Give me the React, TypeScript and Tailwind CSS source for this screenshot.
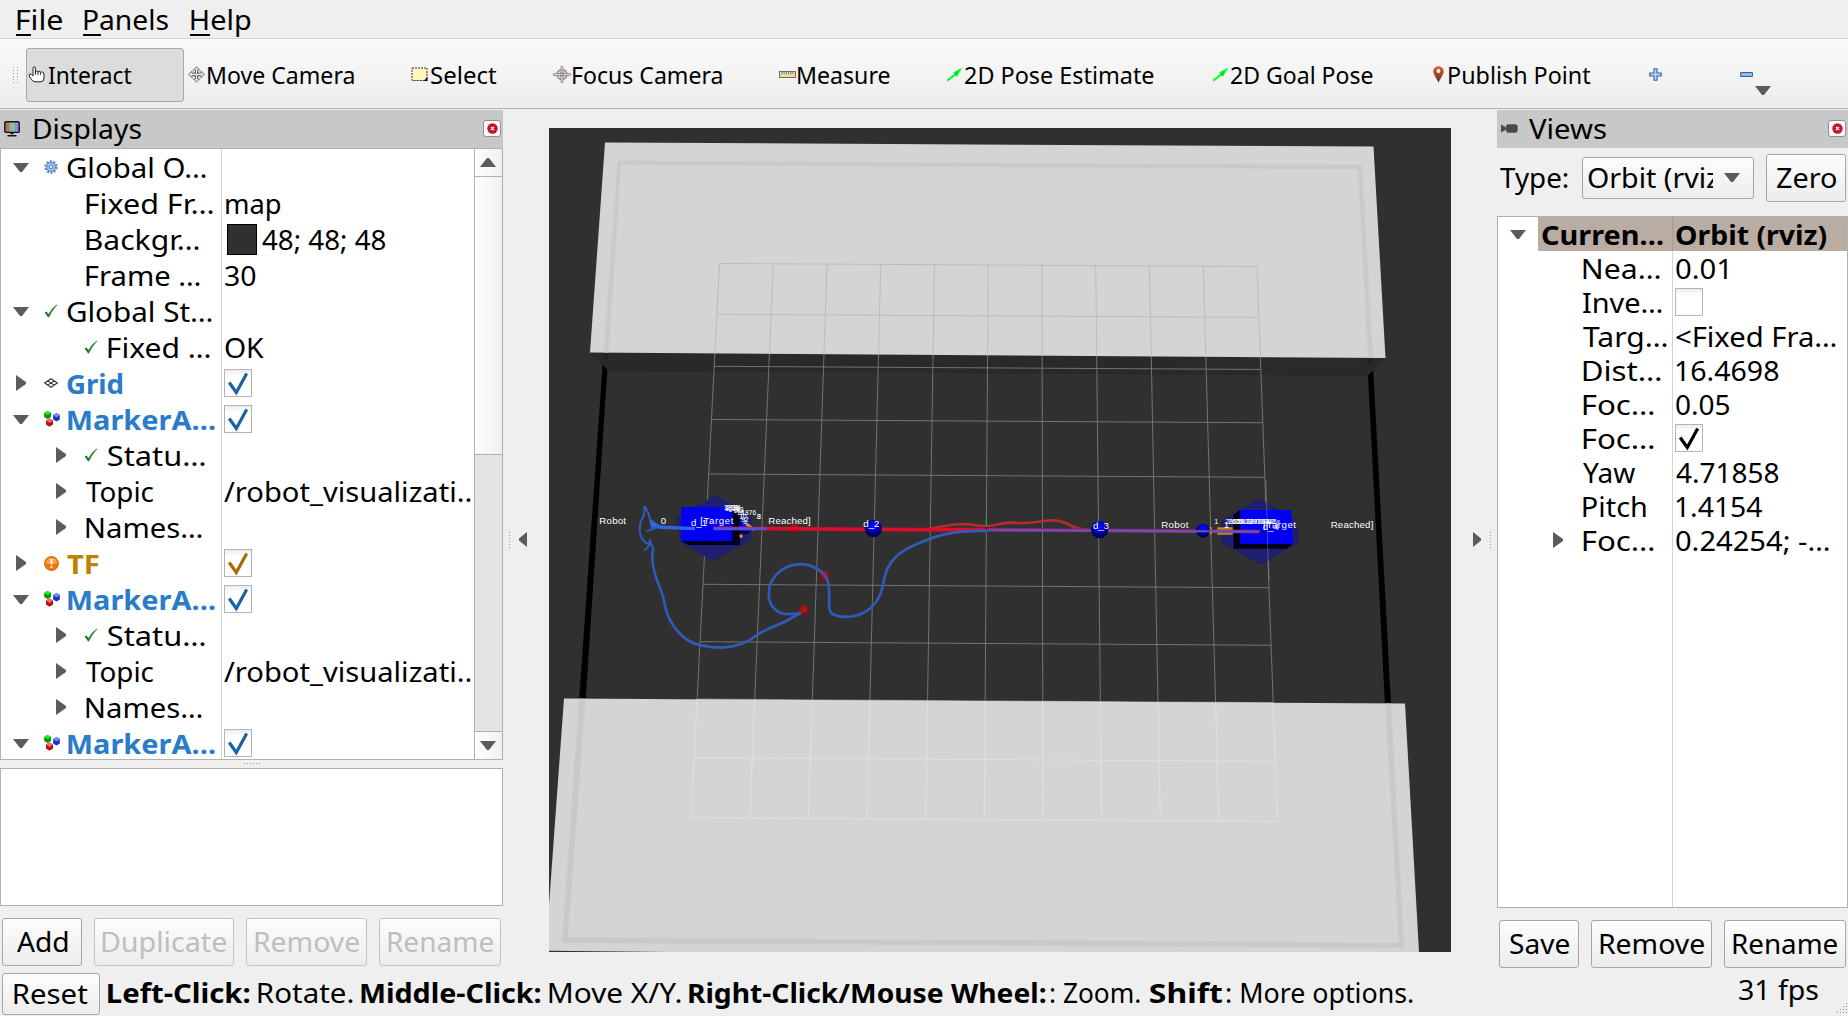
import React from "react";

/* ---------- text ---------- */

const canvas = document.createElement("canvas").getContext("2d")!;

/** A single line of text whose inked area is exactly `w` pixels wide. */
function T({ w, size = 27, bold = false, children, className = "" }: { w: number; size?: number; bold?: boolean; children: string; className?: string }) {
  canvas.font = `${bold ? 700 : 400} ${size}px "Noto Sans", sans-serif`;
  const m = canvas.measureText(children);
  const ink = m.actualBoundingBoxLeft + m.actualBoundingBoxRight;
  return (
    <span className={`block shrink-0 whitespace-pre ${bold ? "font-bold" : ""} ${className}`} style={{ width: w, fontSize: size }}>
      <span className="inline-block origin-left" style={{ transform: `scaleX(${w / ink}) translateX(${m.actualBoundingBoxLeft}px)` }}>
        {children}
      </span>
    </span>
  );
}

/* ---------- small drawings ---------- */

const Down = ({ className = "" }) => (
  <svg width="16" height="9" className={className}><path d="M0 0H16L9 9H7Z" fill="#5b5b5b" /></svg>
);
const Up = () => (
  <svg width="16" height="9"><path d="M0 9H16L9 0H7Z" fill="#5b5b5b" /></svg>
);
const Right = () => (
  <svg width="10" height="16"><path d="M0 0L10 7V9L0 16Z" fill="#5b5b5b" /></svg>
);
const Hand = () => (
  <svg width="17" height="17" viewBox="0 0 17 17">
    <path d="M5 10V2.2Q5 .8 6.2 .8T7.4 2.2V6.5Q7.4 5 8.7 5T10 6.5Q10 5.3 11.2 5.3T12.4 6.8Q12.6 5.8 13.7 5.8Q16 6 16 8V12Q16 15.8 13 15.8H7Q5 15.8 3.6 13.6L1.2 10Q.6 8 2 8Q3.4 8 5 10Z" fill="#fff" stroke="#222" strokeWidth="1" />
    <path d="M7.4 6V9M10 6.5V9M12.4 7V9" stroke="#222" strokeWidth=".9" />
  </svg>
);
const Move = () => (
  <svg width="17" height="17" viewBox="0 0 17 17" fill="#f4f4f4" stroke="#666" strokeWidth="1">
    <path d="M8.5 .8L11.5 4H9.5V7.3H13V5.3L16.3 8.4L13 11.6V9.6H9.5V13H11.5L8.5 16.2L5.5 13H7.5V9.6H4V11.6L.7 8.4L4 5.3V7.3H7.5V4H5.5Z" />
    <path d="M4.6 4.6L12.4 12.2M12.4 4.6L4.6 12.2" strokeDasharray="1 1" />
  </svg>
);
const SelectIcon = () => (
  <svg width="17" height="15" viewBox="0 0 17 15">
    <rect x="1" y="1" width="15" height="12.5" fill="#fdf7bb" stroke="#333" strokeDasharray="2 1" />
    <path d="M16.5 10V14H12.5Z" fill="#111" />
  </svg>
);
const Focus = () => (
  <svg width="18" height="17" viewBox="0 0 18 17" fill="none" stroke="#858585" strokeWidth="1">
    <circle cx="9" cy="8.5" r="5" fill="#e6e6e6" strokeWidth="1.3" />
    <circle cx="9" cy="8.5" r="2.4" />
    <path d="M8 .5H10V16.5H8ZM.5 7.5H17.5V9.5H.5Z" strokeWidth=".8" fill="#ddd" />
  </svg>
);
const Ruler = () => (
  <svg width="17" height="7" viewBox="0 0 17 7">
    <rect x=".5" y=".5" width="16" height="6" fill="#e9dfa6" stroke="#6f6f68" />
    <path d="M3 1V3.5M5.2 1V3M7.4 1V3.5M9.6 1V3M11.8 1V3.5M14 1V3" stroke="#66624c" strokeWidth=".8" />
  </svg>
);
const GreenArrow = () => (
  <svg width="17" height="15" viewBox="0 0 17 15">
    <path d="M16.5 .5L7 5.4L8.3 6.8L.6 12.8L2 14.4L9.6 8.6L10.9 9.8Z" fill="#0aff2c" />
    <path d="M12 3.5L8.8 6.7L10.6 9.4Z" fill="#08c422" />
  </svg>
);
const Pin = () => (
  <svg width="11" height="17" viewBox="0 0 11 17">
    <defs><linearGradient id="pin" x2="0" y2="1"><stop stopColor="#ef5a3a" /><stop offset="1" stopColor="#5b2f14" /></linearGradient></defs>
    <path d="M5.5 .3C8.6 .3 10.7 2.6 10.7 5.4C10.7 8.3 7.4 12 5.5 16.7C3.6 12 .3 8.3 .3 5.4C.3 2.6 2.4 .3 5.5 .3Z" fill="url(#pin)" />
    <circle cx="5.5" cy="5" r="1.9" fill="#fff" />
  </svg>
);
const Plus = () => (
  <svg width="13" height="13" viewBox="0 0 13 13"><path d="M5 .8H8V5H12.2V8H8V12.2H5V8H.8V5H5Z" fill="#b9d3f2" stroke="#3465a4" strokeWidth="1.1" /></svg>
);
const Minus = () => (
  <svg width="13" height="5" viewBox="0 0 13 5"><rect x=".6" y=".6" width="11.8" height="3.8" rx=".5" fill="#a9c6ec" stroke="#3465a4" strokeWidth="1.1" /></svg>
);
const Monitor = () => (
  <svg width="16" height="16" viewBox="0 0 16 16">
    <path d="M1 1H6V11H1Z" fill="#c46a6a" /><path d="M5.5 1H10.5V11H5.5Z" fill="#7fc98a" /><path d="M10.5 1H15V11H10.5Z" fill="#8c8ce8" />
    <rect x=".8" y=".8" width="14.4" height="10.6" rx="1" fill="none" stroke="#111" strokeWidth="1.4" />
    <path d="M6.5 11.5H9.5V13.3H6.5ZM3.5 14H12.5V15.5H3.5Z" fill="#111" />
  </svg>
);
const Camera = () => (
  <svg width="17" height="9" viewBox="0 0 17 9"><path d="M0 .6L4.5 3V6L0 8.4Z" fill="#4a4a4a" /><rect x="5" y=".3" width="11.7" height="8.4" rx="2.6" fill="#4a4a4a" /><path d="M4 4H6V5H4Z" fill="#4a4a4a" /></svg>
);
const Close = () => (
  <span className="flex h-[17px] w-[18px] items-center justify-center rounded-[3px] border border-[#8f8f8f] bg-[#fbfbfb]">
    <svg width="11" height="11" viewBox="0 0 11 11"><circle cx="5.5" cy="5.5" r="5.2" fill="#c8102e" /><path d="M3.9 3.9L7.1 7.1M7.1 3.9L3.9 7.1" stroke="#fff" strokeWidth="1.3" /></svg>
  </span>
);
const Gear = () => (
  <svg width="14" height="14" viewBox="0 0 14 14">
    <circle cx="7" cy="7" r="5.6" fill="none" stroke="#5b8ccb" strokeWidth="2.2" strokeDasharray="2.2 1.3" />
    <circle cx="7" cy="7" r="4.4" fill="#a9c7ec" stroke="#4f82c4" strokeWidth="1" />
    <circle cx="7" cy="7" r="1.9" fill="#dbe8f8" stroke="#4f82c4" strokeWidth="1" />
  </svg>
);
const Ok = () => (
  <svg width="14" height="14" viewBox="0 0 14 14"><path d="M.6 8.6L2.6 7.4L4.4 10.2Q7.5 4.5 12.8 .6L13.2 1Q8 6.5 5 13.2H4Z" fill="#1f7a1f" /></svg>
);
const GridIcon = () => (
  <svg width="14" height="10" viewBox="0 0 14 10" fill="none" stroke="#333" strokeWidth="1.1"><path d="M7 .7L13.3 5L7 9.3L.7 5ZM3.8 2.9L10.1 7.1M10.1 2.9L3.8 7.1" /></svg>
);
const Cubes = () => (
  <svg width="16" height="16" viewBox="0 0 16 16">
    <path d="M3.6 0L7 2V6L3.6 8L.2 6V2Z" fill="#0a8f0a" /><path d="M3.6 0L7 2L3.6 4.2L.2 2Z" fill="#18f018" />
    <path d="M12.5 2L15.8 4V8.5L12.5 10.5L9.2 8.5V4Z" fill="#1733b8" /><path d="M12.5 2L15.8 4L12.5 6.5L9.2 4Z" fill="#6d8dff" />
    <path d="M5.5 7.5L9 9.5V13.5L5.5 15.8L2 13.5V9.5Z" fill="#b31212" /><path d="M5.5 7.5L9 9.5L5.5 12L2 9.5Z" fill="#f26a6a" />
  </svg>
);
const Warn = () => (
  <svg width="15" height="15" viewBox="0 0 15 15"><circle cx="7.5" cy="7.5" r="6.9" fill="#f57900" stroke="#ce5c00" /><path d="M1.8 7Q2.5 2 7.5 1.7Q12.5 2 13.2 7Q7.5 9 1.8 7Z" fill="#fba34c" /><path d="M7.5 3V8.5M7.5 10V12" stroke="#fff" strokeWidth="1.9" /></svg>
);

function Check({ color }: { color?: string }) {
  return (
    <span className="block size-7 shrink-0 border border-[#b4b4b4] bg-gradient-to-b from-[#ececec] via-white via-25% to-white">
      {color && <svg width="26" height="26" viewBox="0 0 26 26"><path d="M4.2 12.5L11.3 22.5L21.7 3.5" fill="none" stroke={color} strokeWidth="3.2" /></svg>}
    </span>
  );
}

const DotsV = () => (
  <div className="flex w-px flex-col gap-0.5">{[0, 1, 2, 3, 4, 5].map((i) => <i key={i} className="block h-px w-px bg-[#999]" />)}</div>
);

function Button({ label, w, tw, h = "h-12", disabled = false }: { label: string; w: string; tw: number; h?: string; disabled?: boolean }) {
  return (
    <div className={`flex ${h} ${w} shrink-0 items-center justify-center rounded-[3px] border bg-gradient-to-b from-[#fdfdfd] to-[#ececec] pb-[2px] ${disabled ? "border-[#c3c3c3] text-[#bebebe]" : "border-[#a6a6a6]"}`}>
      <T w={tw}>{label}</T>
    </div>
  );
}

/* ---------- toolbar ---------- */

const tools: [string, string, React.ReactNode, number][] = [
  ["ml-1", "w-[20px]", <Move />, 146],
  ["ml-[57px]", "w-[20px]", <SelectIcon />, 66],
  ["ml-[56px]", "w-[20px]", <Focus />, 149],
  ["ml-[57px]", "w-[19px]", <Ruler />, 92],
  ["ml-[56px]", "w-[19px]", <GreenArrow />, 189],
  ["ml-[58px]", "w-[19px]", <GreenArrow />, 142],
  ["ml-[60px]", "w-[16px]", <Pin />, 142],
];
const toolNames = ["Move Camera", "Select", "Focus Camera", "Measure", "2D Pose Estimate", "2D Goal Pose", "Publish Point"];

function Toolbar() {
  return (
    <div className="flex h-[70px] items-center border-b border-[#b1b1b1] bg-gradient-to-b from-[#fafafa] to-[#ededed] pt-[2px]">
      <div className="ml-[13px] flex w-[13px] shrink-0 gap-[3px]"><DotsV /><DotsV /></div>
      <div className="flex h-[54px] w-[158px] shrink-0 items-center rounded-[3px] border border-[#a8a8a8] bg-[#dcdcdc] pl-px">
        <span className="w-5"><Hand /></span>
        <T w={84} size={24} className="mt-px">Interact</T>
      </div>
      {tools.map(([ml, iw, icon, w], i) => (
        <div key={i} className={`flex shrink-0 items-center ${ml}`}>
          <span className={`${iw} shrink-0`}>{icon}</span>
          <T w={w} size={24} className="mt-px">{toolNames[i]}</T>
        </div>
      ))}
      <span className="ml-[58px]"><Plus /></span>
      <span className="ml-[78px]"><Minus /></span>
      <Down className="mt-[31px] ml-0.5" />
    </div>
  );
}

/* ---------- property trees ---------- */

type Row = { lvl: number; arrow?: "d" | "r"; icon?: React.ReactNode; name: string; nw: number; color?: string; val?: string; vw?: number; check?: string; swatch?: boolean };
const BLUE = "text-[#2a7ccb]";
const marker = (): Row => ({ lvl: 0, arrow: "d", icon: <Cubes />, name: "MarkerA…", nw: 147, color: BLUE, check: "#1b62a5" });
const markerKids = (): Row[] => [
  { lvl: 1, arrow: "r", icon: <Ok />, name: "Statu…", nw: 97 },
  { lvl: 1, arrow: "r", name: "Topic", nw: 68, val: "/robot_visualizati..", vw: 247 },
  { lvl: 1, arrow: "r", name: "Names…", nw: 116 },
];
const displays: Row[] = [
  { lvl: 0, arrow: "d", icon: <Gear />, name: "Global O…", nw: 139 },
  { lvl: 1, name: "Fixed Fr…", nw: 127, val: "map", vw: 55 },
  { lvl: 1, name: "Backgr…", nw: 113, val: "48; 48; 48", vw: 124, swatch: true },
  { lvl: 1, name: "Frame …", nw: 114, val: "30", vw: 31 },
  { lvl: 0, arrow: "d", icon: <Ok />, name: "Global St…", nw: 145 },
  { lvl: 1, icon: <Ok />, name: "Fixed …", nw: 102, val: "OK", vw: 39 },
  { lvl: 0, arrow: "r", icon: <GridIcon />, name: "Grid", nw: 56, color: BLUE, check: "#1b62a5" },
  marker(),
  ...markerKids(),
  { lvl: 0, arrow: "r", icon: <Warn />, name: "TF", nw: 32, color: "text-[#c08000]", check: "#a66c00" },
  marker(),
  ...markerKids(),
  marker(),
];

function DisplayRow({ r }: { r: Row }) {
  return (
    <div className="flex h-9 shrink-0">
      <div className="flex w-[221px] shrink-0 items-center border-r border-[#d4d4d4]">
        {r.lvl === 1 && <span className="w-10 shrink-0" />}
        <span className={`${r.lvl && !r.icon ? "w-[45px]" : "w-[43px]"} shrink-0 ${r.arrow === "r" ? "pl-[15px]" : "pl-3"}`}>
          {r.arrow === "d" && <Down />}
          {r.arrow === "r" && <Right />}
        </span>
        {r.icon && <span className={`${r.lvl || r.name === "MarkerA…" ? "w-6" : "w-[23px]"} shrink-0`}>{r.icon}</span>}
        <T w={r.nw} bold={!!r.color} className={r.color}>{r.name}</T>
      </div>
      <div className="flex items-center pl-[2px]">
        {r.check && <Check color={r.check} />}
        {r.swatch && <span className="mr-[5px] ml-[3px] block h-[31px] w-[30px] border border-black bg-[#303030]" />}
        {r.val && <T w={r.vw!} className={r.val === "map" ? "ml-[2px]" : r.swatch || r.val[0] === "/" ? "" : "ml-px"}>{r.val}</T>}
      </div>
    </div>
  );
}

function DisplaysPanel() {
  return (
    <section className="flex w-[503px] shrink-0 flex-col">
      <header className="flex h-[38px] shrink-0 items-center bg-[#c8c8c8] pr-[2px] pb-px pl-1">
        <Monitor />
        <T w={107} className="ml-[14px]">Displays</T>
        <span className="ml-auto"><Close /></span>
      </header>
      <div className="flex h-[612px] shrink-0 overflow-hidden border border-[#b1b1b1] bg-white">
        <div className="h-[610px] w-[473px] overflow-hidden">{displays.map((r, i) => <DisplayRow key={i} r={r} />)}</div>
        <div className="flex w-7 shrink-0 flex-col border-l border-[#b1b1b1]">
          <div className="flex h-7 items-center justify-center border-b border-[#b1b1b1] bg-gradient-to-r from-white to-[#f0f0f0] pr-px"><Up /></div>
          <div className="h-[278px] border-b border-[#b1b1b1] bg-gradient-to-r from-white to-[#f0f0f0]" />
          <div className="flex-1 bg-[#e4e4e4]" />
          <div className="flex h-7 items-center justify-center border-t border-[#b1b1b1] bg-gradient-to-r from-white to-[#f0f0f0] pr-px pb-px"><Down /></div>
        </div>
      </div>
      <div className="flex h-2 shrink-0 items-center justify-center gap-0.5 pb-px">{[0, 1, 2, 3, 4, 5].map((i) => <i key={i} className="block size-px bg-[#999]" />)}</div>
      <div className="h-[138px] shrink-0 border border-[#b1b1b1] bg-white" />
      <div className="mt-3 flex gap-3 pl-[2px]">
        <Button label="Add" w="w-20" tw={51} />
        <Button label="Duplicate" w="w-[140px]" tw={124} disabled />
        <Button label="Remove" w="w-[121px]" tw={104} disabled />
        <Button label="Rename" w="w-[122px]" tw={105} disabled />
      </div>
    </section>
  );
}

const views: Row[] = [
  { lvl: 0, arrow: "d", name: "Curren…", nw: 121, val: "Orbit (rviz)", vw: 151 },
  { lvl: 1, name: "Nea…", nw: 77, val: "0.01", vw: 51 },
  { lvl: 1, name: "Inve…", nw: 79, check: "none" },
  { lvl: 1, name: "Targ…", nw: 84, val: "<Fixed Fra…", vw: 160 },
  { lvl: 1, name: "Dist…", nw: 78, val: "16.4698", vw: 103 },
  { lvl: 1, name: "Foc…", nw: 71, val: "0.05", vw: 53 },
  { lvl: 1, name: "Foc…", nw: 71, check: "#000" },
  { lvl: 1, name: "Yaw", nw: 52, val: "4.71858", vw: 103 },
  { lvl: 1, name: "Pitch", nw: 63, val: "1.4154", vw: 86 },
  { lvl: 1, arrow: "r", name: "Foc…", nw: 71, val: "0.24254; -…", vw: 153 },
];

function ViewsPanel() {
  return (
    <section className="flex w-[351px] shrink-0 flex-col">
      <header className="flex h-[38px] shrink-0 items-center bg-[#c8c8c8] pr-[2px] pb-px pl-1">
        <Camera />
        <T w={77} className="ml-[11px]">Views</T>
        <span className="ml-auto"><Close /></span>
      </header>
      <div className="flex h-[68px] shrink-0 items-center pb-[8px] pl-[3px]">
        <T w={68} className="-mt-px">Type:</T>
        <div className="ml-[14px] flex h-[42px] w-[172px] items-center rounded-[3px] border border-[#a6a6a6] bg-gradient-to-b from-[#fdfdfd] to-[#ececec] pb-[2px] pl-[5px]">
          <span className="w-[125px] overflow-x-clip"><T w={140}>Orbit (rviz)</T></span>
          <Down className="mt-px ml-[11px]" />
        </div>
        <div className="ml-3"><Button label="Zero" w="w-20" tw={59} /></div>
      </div>
      <div className="flex h-[692px] shrink-0 flex-col border border-[#b1b1b1] bg-white">
        {views.map((r, i) => (
          <div key={i} className="flex h-[34px] shrink-0">
            <div className="flex w-10 shrink-0 items-center pl-3">{i === 0 && <Down />}</div>
            <div className={`flex w-[135px] shrink-0 items-center border-r ${i === 0 ? "border-[#a99c93] bg-[#b9aca2] pl-1" : "border-[#d4d4d4]"}`}>
              {i > 0 && <span className="w-[45px] shrink-0 pl-[15px]">{r.arrow && <Right />}</span>}
              <T w={r.nw} bold={i === 0}>{r.name}</T>
            </div>
            <div className={`flex flex-1 items-center ${i === 0 ? "bg-[#b9aca2]" : ""} ${r.check ? "pl-[2px]" : "pl-[3px]"}`}>
              {r.check && <Check color={r.check === "none" ? undefined : r.check} />}
              {r.val && <T w={r.vw!} bold={i === 0}>{r.val}</T>}
            </div>
          </div>
        ))}
        <div className="w-[175px] flex-1 border-r border-[#d4d4d4]" />
      </div>
      <div className="mt-3 flex gap-3 pl-[2px]">
        <Button label="Save" w="w-20" tw={59} />
        <Button label="Remove" w="w-[121px]" tw={104} />
        <Button label="Rename" w="w-[122px]" tw={104} />
      </div>
    </section>
  );
}

/* ---------- 3D scene ---------- */

const rowY = [263.5, 314.3, 366.3, 419.5, 474, 529, 584.3, 641.7, 699, 757.7, 817.7];
function gridPath() {
  let d = "";
  for (let i = 0; i <= 10; i++) {
    d += `M${719.5 + i * 53.75} ${263.5 + i * 0.3}L${691 + i * 58.66} ${817.7 + i * 0.38}`;
    const t = (rowY[i] - 263.5) / 554.2;
    d += `M${719.5 - 28.5 * t} ${rowY[i]}L${1257 + 20.6 * t} ${rowY[i] + 3 + 0.8 * t}`;
  }
  return d;
}
const upper = "M605 142.5L1373.5 146.5L1385.5 358L590 352.5Z";
const lower = "M564 698.5L1405 703.5L1419 952H670L549 950.8V905Z";

function Scene() {
  const g = gridPath();
  return (
    <svg width="902" height="824" viewBox="549 128 902 824" className="block" fontFamily="Liberation Sans, Arial, sans-serif">
      <defs>
        <radialGradient id="sb" cx=".5" cy=".35"><stop stopColor="#1010ff" /><stop offset=".65" stopColor="#0000c8" /><stop offset="1" stopColor="#00005a" /></radialGradient>
        <radialGradient id="sr" cx=".5" cy=".4"><stop stopColor="#c01c1c" /><stop offset="1" stopColor="#7c1010" /></radialGradient>
        <clipPath id="up"><path d={upper} /></clipPath>
        <clipPath id="lo"><path d={lower} /></clipPath>
      </defs>
      <rect x="549" y="128" width="902" height="824" fill="#303030" />
      <path d="M603.5 352L608.5 352L585.5 702H579Z" fill="#000" />
      <path d="M1367 356H1372.5L1391 705H1385Z" fill="#000" />
      <path d="M590 352.5L609 361L1368 366L1385.5 358L1368 375.5L609 371Z" fill="#292929" />
      <path d="M590 352.5L609 371L1368 375.5L1385.5 358Z" fill="#292929" fillOpacity=".85" />
      <path d={g} fill="none" stroke="#737373" strokeWidth="1" />

      <path d={upper} fill="#d4d4d4" />
      <g clipPath="url(#up)">
        <path d="M617.5 160.5L1362 165L1373 358H1368L1358 169.3L621 165L608.5 354H603.5Z" fill="#cacaca" />
        <path d={g} fill="none" stroke="#bcbcbc" strokeWidth="1" />
      </g>
      <path d={lower} fill="#d4d4d4" />
      <g clipPath="url(#lo)">
        <path d="M579 698L585.5 698L568 937L1399 943L1385 702H1391L1404 947.7L562 943Z" fill="#c9c9c9" />
        <path d={g} fill="none" stroke="#dfdfdf" strokeWidth="1.2" />
      </g>

      <g transform="translate(580 480) scale(.333333)">
        {/* left robot */}
        <path d="M406 45L516 108L514 180L398 244L300 186L288 112Z" fill="#1f1f70" />
        <path d="M456 80L480 100V195H326L304 183Z" fill="#00001c" />
        <path d="M304 81H457V183H304Z" fill="#0000f4" />
        <path d="M480 165L486 172" stroke="#d89a10" strokeWidth="9" />
        <circle cx="494" cy="144" r="19" fill="url(#sb)" />
        <path d="M500 132L522 150" stroke="#d89a10" strokeWidth="9" />
        {/* right robot */}
        <path d="M2036 55L2146 118L2156 150L2153 190L2042 254L1926 190L1924 122Z" fill="#1f1f70" />
        <path d="M1960 104L1980 90V192H2138L2120 206H1961Z" fill="#000018" />
        <path d="M1980 90H2133L2139 192H1980Z" fill="#0000f4" />
        <circle cx="2068" cy="152" r="24" fill="#0000e8" />
        <path d="M2058 0L2063 200L2068 300" stroke="#8888b8" strokeWidth="2.5" fill="none" opacity=".6" />

        {/* planned routes */}
        <path d="M1046 145C1090 142 1110 132 1150 132C1180 133 1200 140 1225 138C1250 136 1265 127 1300 128C1335 132 1360 128 1390 123C1430 118 1450 124 1475 138Q1490 147 1520 149" fill="none" stroke="#b32c30" strokeWidth="8" />
        <path d="M400 145L1000 149L1226 149" stroke="#dc0c2c" strokeWidth="11" fill="none" />
        <path d="M1226 149L2040 155" stroke="#a01838" strokeWidth="11" fill="none" />
        <path d="M1226 150L2036 155" stroke="#6d4cb4" strokeWidth="8" fill="none" />
        <path d="M1219 115V139" stroke="#00c800" strokeWidth="3.5" />
        <path d="M1219 141V153" stroke="#0a0a80" strokeWidth="4" />
        <path d="M1912 142H1958V149H1912ZM1912 158H1958V164H1912ZM1888 141H1895V163H1888Z" fill="#c58a10" />
        <circle cx="644" cy="146" r="15" fill="url(#sr)" />
        <path d="M620 146H680" stroke="#dc0c2c" strokeWidth="10" />
        <circle cx="734" cy="287" r="16" fill="url(#sr)" />
        <circle cx="671" cy="391" r="16" fill="url(#sr)" />

        {/* driven route */}
        <g fill="none" stroke="#2f5cb8" strokeWidth="8" strokeLinejoin="round">
          <path d="M218 210C214 240 222 280 234 308C246 335 250 350 256 380C264 420 290 458 322 480C355 500 390 503 425 503C470 502 505 486 535 462C575 438 600 436 635 414L661 399C640 403 620 403 604 400C575 388 564 365 567 335C568 295 605 258 650 253C690 249 728 270 741 297C752 322 746 350 748 385Q749 395 757 402C790 418 840 412 872 384C895 362 902 345 909 315C916 275 925 252 948 230C970 208 995 198 1020 188C1060 170 1110 156 1160 154L1226 152" />
          <path d="M193 78Q205 92 210 118L236 139L200 154M193 78Q196 105 184 120Q174 150 184 172Q194 190 206 192M193 212L208 196L209 180L222 212" strokeWidth="6" />
          <path d="M208 118L240 138L214 143Z" fill="#2f6be0" strokeWidth="3" />
        </g>
        <path d="M232 141L345 146" stroke="#2c68e0" strokeWidth="10" />
        <path d="M400 146H560" stroke="#4a56e0" strokeWidth="8" />
        <circle cx="376" cy="150" r="24" fill="#0000ee" />

        <circle cx="880" cy="146" r="26" fill="url(#sb)" />
        <circle cx="1559" cy="149" r="26" fill="url(#sb)" />
        <circle cx="1869" cy="152" r="21" fill="url(#sb)" />
        <path d="M1585 152L2034 155" stroke="#6d4cb8" strokeWidth="7" />

        {/* labels */}
        <g fill="#fff" fontSize="29">
          <text x="58" y="133" textLength="80">Robot</text>
          <text x="242" y="133">0</text>
          <text x="333" y="139">d_1</text>
          <text x="361" y="133" textLength="99">[Target</text>
          <text x="565" y="133" textLength="127">Reached]</text>
          <text x="850" y="142" textLength="48">d_2</text>
          <text x="1539" y="146" textLength="48">d_3</text>
          <text x="1744" y="143" textLength="81">Robot</text>
          <text x="1903" y="131" fontSize="22">1</text>
          <text x="1931" y="143">1</text>
          <text x="2050" y="143" textLength="98">[Target</text>
          <text x="2048" y="149">d_4</text>
          <text x="2252" y="143" textLength="128">Reached]</text>
        </g>
        <g fill="#fff" fontSize="20">
          <text x="432" y="91">3231</text><text x="435" y="93">8029</text><text x="438" y="90">2726</text><text x="446" y="96">2423</text>
          <text x="462" y="99">21</text><text x="470" y="104">18</text><text x="484" y="106">1876</text><text x="478" y="118">10</text><text x="484" y="126">92</text><text x="530" y="116">8</text><text x="532" y="118">3</text><text x="490" y="134">4</text>
          <text x="1936" y="131">28654</text><text x="1944" y="131">2675</text><text x="1960" y="131">32403</text><text x="1976" y="131">018297</text><text x="1998" y="131">384</text><text x="2012" y="131">27864</text><text x="2030" y="131">18093</text><text x="2046" y="131">7865x</text>
        </g>
      </g>
    </svg>
  );
}

/* ---------- window ---------- */

const menus: [string, string, number, string][] = [
  ["File", "", 45, "w-[15px]"],
  ["Panels", "ml-[22px]", 84, "w-[18px]"],
  ["Help", "ml-[23px]", 60, "w-5"],
];

export default function App() {
  return (
    <div className="flex h-[1016px] w-[1848px] flex-col overflow-hidden bg-[#efefef] font-['Noto_Sans',sans-serif] leading-none text-black">
      <nav className="flex h-[39px] shrink-0 items-center border-b border-[#d2d2d2] pl-[17px]">
        {menus.map(([label, ml, w, uw]) => (
          <div key={label} className={`relative ${ml}`}>
            <T w={w}>{label}</T>
            <i className={`absolute -bottom-[3px] -left-px block h-0.5 bg-black ${uw}`} />
          </div>
        ))}
      </nav>
      <Toolbar />
      <main className="flex h-[860px] shrink-0 pt-px">
        <DisplaysPanel />
        <div className="flex w-[46px] shrink-0 items-center gap-[9px] pl-[6px]">
          <DotsV />
          <svg width="8" height="15"><path d="M8 0V15L0 8.5V6.5Z" fill="#5b5b5b" /></svg>
        </div>
        <div className="w-[902px] shrink-0 pt-[18px]"><Scene /></div>
        <div className="flex w-[46px] shrink-0 items-center gap-[9px] pl-[22px]">
          <svg width="8" height="15"><path d="M0 0V15L8 8.5V6.5Z" fill="#5b5b5b" /></svg>
          <DotsV />
        </div>
        <ViewsPanel />
      </main>
      <footer className="relative flex flex-1 items-start pt-1 pl-[2px]">
        <Button label="Reset" w="w-[98px]" tw={74} h="h-[42px]" />
        <div className="flex h-[42px] items-center pb-[3px] pl-2">
          <T w={142} bold>Left-Click:</T>
          <T w={95} className="ml-2">Rotate.</T>
          <T w={180} bold className="ml-2">Middle-Click:</T>
          <T w={132} className="ml-[8px]">Move X/Y.</T>
          <T w={357} bold className="ml-[8px]">Right-Click/Mouse Wheel:</T>
          <T w={90} className="ml-[4px]">: Zoom.</T>
          <T w={72} bold className="ml-[10px]">Shift</T>
          <T w={187} className="ml-[4px]">: More options.</T>
        </div>
        <div className="mt-[3px] mr-[30px] ml-auto"><T w={79}>31 fps</T></div>
        <svg width="12" height="12" className="absolute right-0 bottom-0 mb-px">
          <path d="M10 .5H11M7 3.5H8M10 3.5H11M4 6.5H5M7 6.5H8M10 6.5H11M1 9.5H2M4 9.5H5M7 9.5H8M10 9.5H11" stroke="#888" strokeWidth="1" />
        </svg>
      </footer>
    </div>
  );
}
